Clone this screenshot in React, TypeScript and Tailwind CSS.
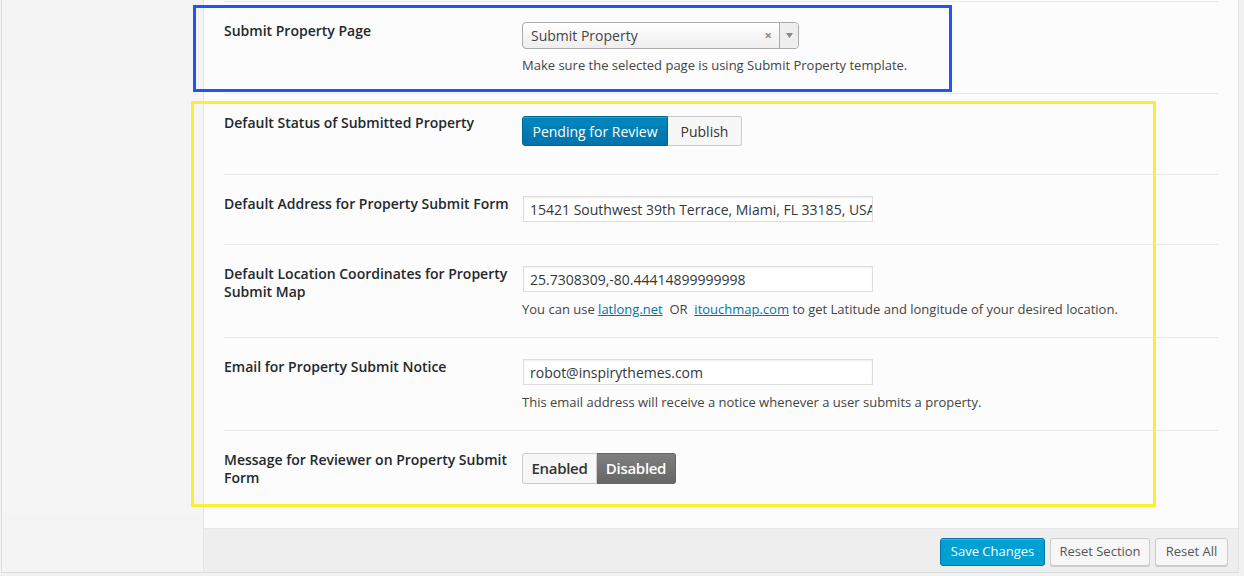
import type { ReactNode } from 'react'

function Row({ label, children, h, last }: { label: ReactNode; children: ReactNode; h: string; last?: boolean }) {
  return (
    <div className={`flex ${h} ${last ? '' : 'border-b border-[#e8e8e8]'}`}>
      <div className="w-[298px] shrink-0 pr-[12px] pt-[20px] text-[14px] font-semibold leading-[18px] text-[#23282d]">
        {label}
      </div>
      <div className="flex-1">{children}</div>
    </div>
  )
}

function TextInput({ value }: { value: string }) {
  return (
    <div className="ml-px flex h-[26px] w-[350px] items-center overflow-hidden whitespace-nowrap border border-[#dddddd] bg-white px-[6px] text-[14px] text-[#32373c] shadow-[inset_0_1px_2px_rgba(0,0,0,0.07)]">
      {value}
    </div>
  )
}

export default function App() {
  return (
    <div className="relative h-[576px] w-[1244px] overflow-hidden bg-[#f1f1f1] font-['Open_Sans',sans-serif]">
      <div className="ml-[1px] flex h-[573px] w-[1238px] border-b border-l border-[#dedede]">
        {/* Sidebar */}
        <div className="flex w-[201px] shrink-0 flex-col">
          <div className="h-[80px] bg-[#f3f3f3]" />
          <div className="flex-1 bg-[#f5f5f5]" />
          <div className="h-[57px] bg-[#f4f4f4]" />
        </div>

        {/* Main panel */}
        <div className="flex flex-1 flex-col border-l border-r border-[#e5e5e5] bg-[#fcfcfc]">
          <div className="flex-1 pl-[20px] pr-[20px] pt-px">
            <div className="border-t border-[#e8e8e8]">
              <Row h="h-[92px]" label="Submit Property Page">
                <div className="pt-[20px]">
                  <div className="flex h-[27px] w-[277px] items-center overflow-hidden rounded-[4px] border border-[#aaaaaa] bg-gradient-to-b from-white to-[#eeeeee]">
                    <span className="flex-1 pl-[8px] text-[14px] text-[#444444]">Submit Property</span>
                    <span className="mr-[7px] text-[13px] font-bold leading-none text-[#888888]">×</span>
                    <span className="flex h-full w-[19px] items-center justify-center border-l border-[#aaaaaa] bg-[#eeeeee]">
                      <svg width="7" height="5" viewBox="0 0 7 5">
                        <path d="M0 0h7L3.5 5z" fill="#888888" />
                      </svg>
                    </span>
                  </div>
                  <p className="mt-[6px] text-[13px] leading-[20px] text-[#444444]">
                    Make sure the selected page is using Submit Property template.
                  </p>
                </div>
              </Row>

              <Row h="h-[81px]" label="Default Status of Submitted Property">
                <div className="flex pt-[22px]">
                  <button className="h-[30px] w-[146px] rounded-l-[3px] border border-[#006799] bg-gradient-to-b from-[#0087bf] to-[#0073aa] text-[14px] text-white shadow-[inset_0_1px_0_rgba(120,200,230,0.4)]">
                    Pending for Review
                  </button>
                  <button className="h-[30px] w-[74px] rounded-r-[3px] border border-l-0 border-[#cccccc] bg-[#f7f7f7] text-[14px] text-[#333333]">
                    Publish
                  </button>
                </div>
              </Row>

              <Row h="h-[70px]" label="Default Address for Property Submit Form">
                <div className="pt-[21px]">
                  <TextInput value="15421 Southwest 39th Terrace, Miami, FL 33185, USA" />
                </div>
              </Row>

              <Row h="h-[93px]" label="Default Location Coordinates for Property Submit Map">
                <div className="pt-[21px]">
                  <TextInput value="25.7308309,-80.44414899999998" />
                  <p className="mt-[7px] whitespace-nowrap text-[13px] leading-[20px] text-[#444444]">
                    You can use{' '}
                    <a href="#" className="text-[#0073aa] underline">
                      latlong.net
                    </a>
                    &nbsp; OR &nbsp;
                    <a href="#" className="text-[#0073aa] underline">
                      itouchmap.com
                    </a>{' '}
                    to get Latitude and longitude of your desired location.
                  </p>
                </div>
              </Row>

              <Row h="h-[93px]" label="Email for Property Submit Notice">
                <div className="pt-[21px]">
                  <TextInput value="robot@inspirythemes.com" />
                  <p className="mt-[7px] text-[13px] leading-[20px] text-[#444444]">
                    This email address will receive a notice whenever a user submits a property.
                  </p>
                </div>
              </Row>

              <Row last h="h-[96px]" label="Message for Reviewer on Property Submit Form">
                <div className="flex pt-[22px]">
                  <button className="h-[31px] w-[75px] rounded-l-[3px] border border-[#cccccc] bg-[#f7f7f7] text-[15px] font-semibold tracking-[-0.3px] text-[#333333]">
                    Enabled
                  </button>
                  <button className="h-[31px] w-[79px] rounded-r-[3px] border border-l-0 border-[#666666] bg-gradient-to-b from-[#7f7f7f] to-[#666666] text-[15px] font-semibold tracking-[-0.3px] text-white">
                    Disabled
                  </button>
                </div>
              </Row>
            </div>
          </div>

          {/* Footer */}
          <div className="flex h-[44px] items-center justify-end gap-[5px] border-t border-[#e8e8e8] bg-[#eeeeee] pr-[10px] pt-[2px]">
            <button className="h-[28px] w-[105px] rounded-[3px] border border-[#0073aa] bg-[#00a0d2] text-[13px] text-white shadow-[inset_0_1px_0_rgba(120,200,230,0.5)]">
              Save Changes
            </button>
            <button className="h-[28px] w-[100px] rounded-[3px] border border-[#cccccc] bg-[#f7f7f7] text-[13px] text-[#555555] shadow-[0_1px_0_#cccccc]">
              Reset Section
            </button>
            <button className="h-[28px] w-[73px] rounded-[3px] border border-[#cccccc] bg-[#f7f7f7] text-[13px] text-[#555555] shadow-[0_1px_0_#cccccc]">
              Reset All
            </button>
          </div>
        </div>
      </div>

      {/* Annotation highlights */}
      <div className="pointer-events-none absolute left-[193px] top-[5px] h-[87px] w-[759px] border-[3px] border-[#1f55f5]" />
      <div className="pointer-events-none absolute left-[191px] top-[101px] h-[406px] w-[965px] border-[3px] border-[#f9ef34]" />
    </div>
  )
}
